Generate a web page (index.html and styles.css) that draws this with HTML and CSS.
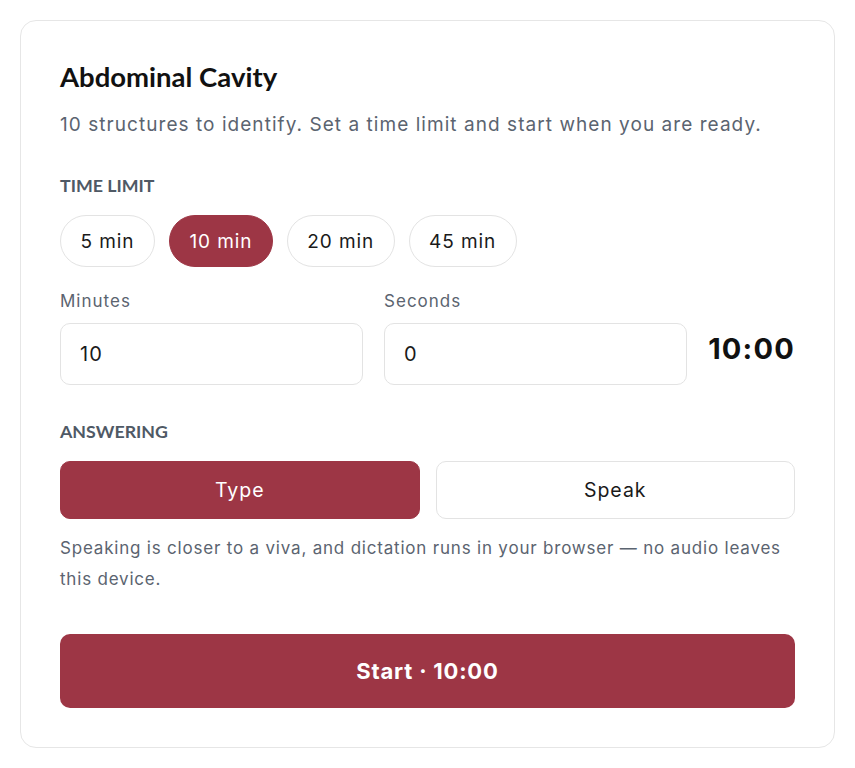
FILE: index.html
```html
<!DOCTYPE html>
<html lang="en">
<head>
<meta charset="utf-8">
<title>Abdominal Cavity</title>
<link rel="stylesheet" href="styles.css">
</head>
<body>
<main class="card">
  <h1 class="title">Abdominal Cavity</h1>
  <p class="subtitle">10 structures to identify. Set a time limit and start when you are ready.</p>

  <h2 class="section-label">TIME LIMIT</h2>
  <div class="pills">
    <button class="pill">5 min</button>
    <button class="pill pill-active">10 min</button>
    <button class="pill">20 min</button>
    <button class="pill">45 min</button>
  </div>

  <div class="time-row">
    <label class="field">
      <span class="field-label">Minutes</span>
      <span class="input">10</span>
    </label>
    <label class="field">
      <span class="field-label">Seconds</span>
      <span class="input">0</span>
    </label>
    <div class="total">10:00</div>
  </div>

  <h2 class="section-label answering">ANSWERING</h2>
  <div class="modes">
    <button class="mode mode-active">Type</button>
    <button class="mode">Speak</button>
  </div>
  <p class="hint">Speaking is closer to a viva, and dictation runs in your browser — no audio leaves this device.</p>

  <button class="start">Start · 10:00</button>
</main>
</body>
</html>
```

FILE: styles.css
```css
* { box-sizing: border-box; }
html, body { margin: 0; background: #ffffff; }
body {
  padding: 20px;
  font-family: Inter, "Noto Sans", "Liberation Sans", sans-serif;
  color: #1a1a1a;
}
.card {
  width: 815px;
  height: 728px;
  border: 1px solid #e6e6e6;
  border-radius: 16px;
  padding: 40px 39px 38px;
  display: flex;
  flex-direction: column;
}
.title {
  margin: 0;
  font-family: Lato, "Liberation Sans", sans-serif;
  font-weight: 700;
  font-size: 27.5px;
  line-height: 32px;
  color: #111;
}
.subtitle {
  margin: 18px 0 0;
  font-size: 19px;
  letter-spacing: 1.05px;
  line-height: 28px;
  color: #5b6470;
  white-space: nowrap;
}
.section-label {
  margin: 36px 0 0;
  font-family: Lato, "Liberation Sans", sans-serif;
  font-size: 17.8px;
  font-weight: 700;
  letter-spacing: 0;
  line-height: 20px;
  color: #4f5965;
}
.pills {
  display: flex;
  gap: 14px;
  margin-top: 20px;
}
.pill {
  height: 52px;
  padding: 0 19.5px;
  border: 1px solid #e3e3e3;
  border-radius: 26px;
  background: #fff;
  font-family: Inter, "Noto Sans", sans-serif;
  font-size: 19px;
  letter-spacing: 0.9px;
  color: #1a1a1a;
}
.pill-active {
  background: #9d3645;
  border-color: #9d3645;
  color: #fff;
}
.time-row {
  display: flex;
  align-items: flex-end;
  gap: 21px;
  margin-top: 23px;
}
.field {
  display: flex;
  flex-direction: column;
  width: 304px;
}
.field-label {
  font-size: 17px;
  letter-spacing: 1px;
  line-height: 22px;
  color: #5b6470;
}
.input {
  margin-top: 11px;
  height: 62px;
  border: 1px solid #e3e3e3;
  border-radius: 10px;
  padding: 0 19px;
  display: flex;
  align-items: center;
  font-size: 20px;
  letter-spacing: 1px;
  color: #1a1a1a;
}
.total {
  height: 50px;
  margin-bottom: 12px;
  font-size: 29px;
  font-weight: 700;
  letter-spacing: 1.2px;
  color: #111;
  display: flex;
  align-items: center;
}
.answering { margin-top: 36px; }
.modes {
  display: grid;
  grid-template-columns: 1fr 1fr;
  gap: 16px;
  margin-top: 20px;
}
.mode {
  height: 58px;
  border: 1px solid #e3e3e3;
  border-radius: 10px;
  background: #fff;
  font-family: Inter, "Noto Sans", sans-serif;
  font-size: 19.5px;
  letter-spacing: 1px;
  color: #1a1a1a;
}
.mode-active {
  background: #9d3645;
  border-color: #9d3645;
  color: #fff;
}
.hint {
  margin: 14px 0 0;
  font-size: 17px;
  letter-spacing: 0.8px;
  line-height: 31px;
  color: #5b6470;
}
.start {
  margin-top: 39px;
  height: 74px;
  border: none;
  border-radius: 10px;
  background: #9d3645;
  color: #fff;
  font-family: Inter, "Noto Sans", sans-serif;
  font-size: 22px;
  font-weight: 700;
  letter-spacing: 0.8px;
}
```
